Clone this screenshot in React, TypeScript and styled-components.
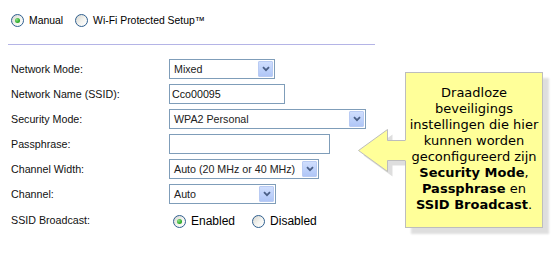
import styled, { createGlobalStyle } from "styled-components";

const GlobalStyle = createGlobalStyle`
  body {
    margin: 0;
    background: #fff;
    font-family: "Liberation Sans", Arial, sans-serif;
    color: #000;
  }
`;

const Page = styled.div`
  position: relative;
  width: 556px;
  height: 254px;
  overflow: hidden;
`;

const ModeBar = styled.div`
  display: flex;
  align-items: center;
  padding: 14px 0 0 11px;
  height: 13px;
  font-size: 10.4px;
`;

const RadioOption = styled.label<{ $gap?: number }>`
  display: flex;
  align-items: center;
  gap: 5px;
  margin-right: ${(p) => p.$gap ?? 0}px;
  white-space: nowrap;
`;

const RadioDot = styled.span<{ $checked?: boolean }>`
  position: relative;
  box-sizing: border-box;
  width: 13px;
  height: 13px;
  border-radius: 50%;
  border: 1px solid #2f5f8f;
  background: linear-gradient(135deg, #d6d6d0 0%, #f4f4f0 55%, #ffffff 100%);
  flex: none;
  &::after {
    content: "";
    display: ${(p) => (p.$checked ? "block" : "none")};
    position: absolute;
    left: 3px;
    top: 3px;
    width: 5px;
    height: 5px;
    border-radius: 50%;
    background: radial-gradient(circle at 35% 35%, #8ee08a 0%, #2fae2b 60%, #1d8a1d 100%);
  }
`;

const Divider = styled.div`
  margin: 17px 0 0 8px;
  width: 367px;
  border-top: 1px solid #b4b4e6;
`;

const Form = styled.div`
  display: grid;
  grid-template-columns: 158px auto;
  row-gap: 5px;
  padding-left: 11px;
  margin-top: 14px;
  font-size: 10.7px;
`;

const Label = styled.div`
  align-self: center;
  color: #111;
`;

const Field = styled.div`
  display: flex;
  align-items: center;
  height: 20px;
`;

const SelectBox = styled.div<{ $width: number }>`
  box-sizing: border-box;
  display: flex;
  align-items: center;
  width: ${(p) => p.$width}px;
  height: 20px;
  border: 1px solid #7f9db9;
  background: #fff;
  padding-left: 4px;
  color: #222;
`;

const SelectText = styled.span`
  flex: 1;
  white-space: nowrap;
`;

const DropButton = styled.span`
  box-sizing: border-box;
  display: flex;
  align-items: center;
  justify-content: center;
  width: 15px;
  height: 16px;
  margin-right: 1px;
  border: 1px solid #b9cbf3;
  border-radius: 1px;
  background: linear-gradient(180deg, #d0defd 0%, #bcd0fa 60%, #b0c6f6 100%);
`;

const TextInput = styled.div<{ $width: number }>`
  box-sizing: border-box;
  display: flex;
  align-items: center;
  width: ${(p) => p.$width}px;
  height: 20px;
  border: 1px solid #7f9db9;
  background: #fff;
  padding-left: 2px;
  color: #111;
`;

const RadioGroup = styled.div`
  display: flex;
  align-items: center;
  height: 22px;
  padding: 2px 0 0 4px;
  box-sizing: border-box;
  font-size: 12px;
  color: #000;
`;

const Callout = styled.div`
  position: absolute;
  left: 405px;
  top: 72px;
  box-sizing: border-box;
  width: 138px;
  height: 156px;
  border: 1px solid #bdbdbd;
  background: #ffff99;
  box-shadow: 6px 6px 2px rgba(0, 0, 0, 0.13);
  padding-top: 12px;
  font-family: "DejaVu Sans", Verdana, sans-serif;
  font-size: 13px;
  line-height: 16px;
  text-align: center;
  color: #000;
`;

const Arrow = styled.svg`
  position: absolute;
  left: -48px;
  top: 56px;
  overflow: visible;
`;

function Chevron() {
  return (
    <svg width="8" height="6" viewBox="0 0 8 6">
      <path d="M1 1.2 L4 4.2 L7 1.2" fill="none" stroke="#4a5f86" strokeWidth="1.8" />
    </svg>
  );
}

function Select({ width, value }: { width: number; value: string }) {
  return (
    <SelectBox $width={width}>
      <SelectText>{value}</SelectText>
      <DropButton>
        <Chevron />
      </DropButton>
    </SelectBox>
  );
}

function Radio({ checked, text, gap }: { checked?: boolean; text: string; gap?: number }) {
  return (
    <RadioOption $gap={gap}>
      <RadioDot $checked={checked} />
      {text}
    </RadioOption>
  );
}

export default function App() {
  return (
    <Page>
      <GlobalStyle />
      <ModeBar>
        <Radio checked text="Manual" gap={12} />
        <Radio text="Wi-Fi Protected Setup™" />
      </ModeBar>
      <Divider />
      <Form>
        <Label>Network Mode:</Label>
        <Field>
          <Select width={106} value="Mixed" />
        </Field>
        <Label>Network Name (SSID):</Label>
        <Field>
          <TextInput $width={116}>Cco00095</TextInput>
        </Field>
        <Label>Security Mode:</Label>
        <Field>
          <Select width={197} value="WPA2 Personal" />
        </Field>
        <Label>Passphrase:</Label>
        <Field>
          <TextInput $width={161} />
        </Field>
        <Label>Channel Width:</Label>
        <Field>
          <Select width={150} value="Auto (20 MHz or 40 MHz)" />
        </Field>
        <Label>Channel:</Label>
        <Field>
          <Select width={107} value="Auto" />
        </Field>
        <Label>SSID Broadcast:</Label>
        <RadioGroup>
          <Radio checked text="Enabled" gap={17} />
          <Radio text="Disabled" />
        </RadioGroup>
      </Form>

      <Callout>
        Draadloze
        <br />
        beveiligings
        <br />
        instellingen die hier
        <br />
        kunnen worden
        <br />
        geconfigureerd zijn
        <br />
        <b>Security Mode</b>,
        <br />
        <b>Passphrase</b> en
        <br />
        <b>SSID Broadcast</b>.
        <Arrow width="50" height="50" viewBox="0 0 50 50">
          <path d="M5.5 26.5 L34.5 5.5 V16.5 H47 V36.5 H34.5 V47.5 Z" fill="rgba(0,0,0,0.13)" />
          <path d="M0.5 21.5 L29.5 0.5 V11.5 H49 V31.5 H29.5 V42.5 Z" fill="#ffff99" />
          <path
            d="M47 11.5 H29.5 V0.5 L0.5 21.5 L29.5 42.5 V31.5 H47"
            fill="none"
            stroke="#bdbdbd"
            strokeWidth="1"
          />
        </Arrow>
      </Callout>
    </Page>
  );
}
